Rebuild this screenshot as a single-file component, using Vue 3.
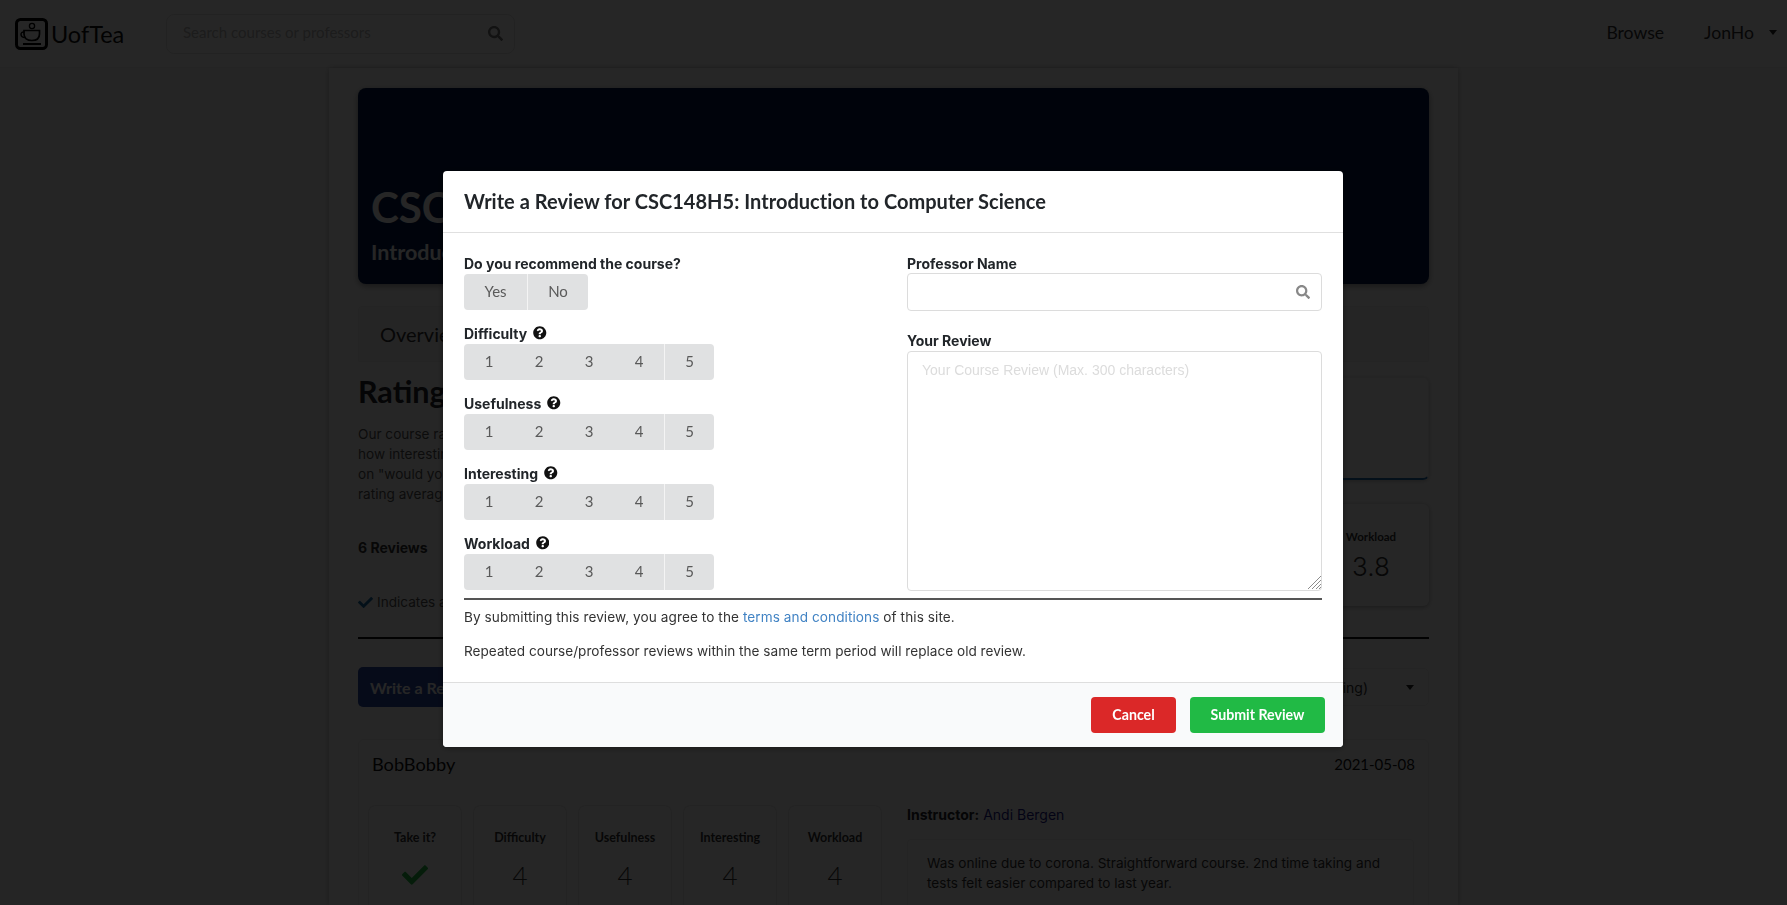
<script setup>
const ratingNames = ['Difficulty', 'Usefulness', 'Interesting', 'Workload']
const summary = [
  { name: 'Difficulty', value: '3.2' },
  { name: 'Usefulness', value: '4.0' },
  { name: 'Interesting', value: '3.7' },
  { name: 'Workload', value: '3.8' },
]
const scores = ['Difficulty', 'Usefulness', 'Interesting', 'Workload']
const searchPath = 'M505 442.7L405.3 343c-4.5-4.5-10.6-7-17-7H372c27.6-35.3 44-79.7 44-128C416 93.1 322.9 0 208 0S0 93.1 0 208s93.1 208 208 208c48.3 0 92.7-16.4 128-44v16.3c0 6.4 2.5 12.5 7 17l99.7 99.7c9.4 9.4 24.6 9.4 33.9 0l28.3-28.3c9.4-9.4 9.4-24.6.1-34zM208 336c-70.7 0-128-57.2-128-128 0-70.7 57.2-128 128-128 70.7 0 128 57.2 128 128 0 70.7-57.2 128-128 128z'
const helpPath = 'M504 256c0 136.997-111.043 248-248 248S8 392.997 8 256C8 119.083 119.043 8 256 8s248 111.083 248 248zM262.655 90c-54.497 0-89.255 22.957-116.549 63.758-3.536 5.286-2.353 12.415 2.715 16.258l34.699 26.31c5.205 3.947 12.621 3.008 16.665-2.122 17.864-22.658 30.113-35.797 57.303-35.797 20.429 0 45.698 13.148 45.698 32.958 0 14.976-12.363 22.667-32.534 33.976C247.128 238.528 216 254.941 216 296v4c0 6.627 5.373 12 12 12h56c6.627 0 12-5.373 12-12v-1.333c0-28.462 83.186-29.647 83.186-106.667 0-58.002-60.165-102-116.531-102zM256 338c-25.365 0-46 20.635-46 46 0 25.364 20.635 46 46 46s46-20.636 46-46c0-25.365-20.635-46-46-46z'
const checkPath = 'M173.898 439.404l-166.4-166.4c-9.997-9.997-9.997-26.206 0-36.204l36.203-36.204c9.997-9.998 26.207-9.998 36.204 0L192 312.69 432.095 72.596c9.997-9.997 26.207-9.997 36.204 0l36.203 36.204c9.997 9.997 9.997 26.206 0 36.204l-294.4 294.401c-9.998 9.997-26.207 9.997-36.204-.001z'
</script>

<template>
  <div class="page">
    <header class="nav">
      <svg class="logo" viewBox="0 0 33 32" fill="none" stroke="#000" stroke-width="2">
        <rect x="1.5" y="1.5" width="30" height="29" rx="4" stroke-width="3" />
        <circle cx="17" cy="8" r="2.6" stroke-width="1.3" />
        <path d="M9 12.5h15.5v3.5c0 4.2-3.2 6.5-7.7 6.5S9 20.2 9 16z" stroke-width="1.7" />
        <path d="M9.5 14c-4.8-1-4.8 5.8 1 5.5" stroke-width="1.5" />
        <path d="M8 26h18" stroke-width="2" />
      </svg>
      <span class="brand">UofTea</span>
      <div class="nav-search">
        <input class="nav-input" placeholder="Search courses or professors" />
        <svg class="nav-icon" viewBox="0 0 512 512"><path :d="searchPath" /></svg>
      </div>
      <nav class="nav-links">
        <span class="nav-browse">Browse</span>
        <span class="nav-user">JonHo</span>
        <i class="caret nav-caret"></i>
      </nav>
    </header>

    <main class="sheet">
      <section class="hero">
        <h1 class="hero-code">CSC148H5</h1>
        <h2 class="hero-name">Introduction to Computer Science</h2>
      </section>

      <div class="tabs"><span class="tab">Overview</span></div>

      <section class="ratings">
        <div class="ratings-text">
          <h2 class="ratings-title">Ratings</h2>
          <p class="ratings-copy">Our course ratings are based on difficulty, usefulness,<br />
            how interesting the course is, and workload. The percentage is<br />
            on "would you take it again" answers, with each<br />
            rating averaged from all reviews.</p>
          <p class="review-count">6 Reviews</p>
          <p class="indicates">
            <svg class="indicates-check" viewBox="0 0 512 512"><path :d="checkPath" /></svg>
            Indicates a user's recommendation
          </p>
        </div>
        <div class="ratings-cards">
          <div class="overall"></div>
          <div class="summary-row">
            <div v-for="s in summary" :key="s.name" class="summary-card">
              <span class="summary-label">{{ s.name }}</span>
              <span class="summary-value">{{ s.value }}</span>
            </div>
          </div>
        </div>
      </section>

      <hr class="rule" />

      <div class="toolbar">
        <span class="write-btn">Write a Review</span>
        <span class="sort">Date (Descending)<i class="caret sort-caret"></i></span>
      </div>

      <article class="review">
        <div class="review-head">
          <span class="review-user">BobBobby</span>
          <span class="review-date">2021-05-08</span>
        </div>
        <div class="review-main">
          <div class="score-row">
            <div class="score-card">
              <span class="score-label">Take it?</span>
              <svg class="score-check" viewBox="0 0 512 512"><path :d="checkPath" /></svg>
            </div>
            <div v-for="s in scores" :key="s" class="score-card">
              <span class="score-label">{{ s }}</span>
              <span class="score-value">4</span>
            </div>
          </div>
          <div class="review-body">
            <p class="instructor"><b>Instructor:</b> <span class="instructor-name">Andi Bergen</span></p>
            <div class="review-text">Was online due to corona. Straightforward course. 2nd time taking and tests felt easier compared to last year.</div>
          </div>
        </div>
      </article>
    </main>

    <div class="overlay">
      <div class="modal">
        <div class="modal-head"><span class="modal-title">Write a Review for CSC148H5: Introduction to Computer Science</span></div>
        <div class="modal-body">
          <div class="form-grid">
            <div class="form-left">
              <div class="field">
                <div class="label">Do you recommend the course?</div>
                <div class="group">
                  <span class="opt opt-yes">Yes</span>
                  <span class="opt opt-no">No</span>
                </div>
              </div>
              <div v-for="name in ratingNames" :key="name" class="field">
                <div class="label">
                  {{ name }}
                  <svg class="help" viewBox="0 0 512 512"><path :d="helpPath" /></svg>
                </div>
                <div class="group">
                  <span v-for="n in 5" :key="n" class="opt opt-num" :class="{ 'opt-last': n === 5 }">{{ n }}</span>
                </div>
              </div>
            </div>
            <div class="form-right">
              <div class="label label-tight">Professor Name</div>
              <div class="prof">
                <input class="prof-input" />
                <svg class="prof-icon" viewBox="0 0 512 512"><path :d="searchPath" /></svg>
              </div>
              <div class="label label-review">Your Review</div>
              <div class="review-wrap">
                <textarea class="review-input" placeholder="Your Course Review (Max. 300 characters)"></textarea>
                <svg class="grip" viewBox="0 0 13 13" fill="none" stroke="#8c8c8c" stroke-width="1">
                  <path d="M0 13L13 0M4 13L13 4M8 13L13 8M11 13L13 11" />
                </svg>
              </div>
            </div>
          </div>
          <div class="divider"></div>
          <p class="note note-first">By submitting this review, you agree to the <a class="link">terms and conditions</a> of this site.</p>
          <p class="note note-second">Repeated course/professor reviews within the same term period will replace old review.</p>
        </div>
        <div class="modal-foot">
          <span class="btn btn-cancel">Cancel</span>
          <span class="btn btn-submit">Submit Review</span>
        </div>
      </div>
    </div>
  </div>
</template>

<style>
html, body { height: 100%; overflow: hidden; background: #f9f9f9; }
</style>

<style scoped>
.page { height: 905px; overflow: hidden; font-family: Inter, "Liberation Sans", sans-serif; color: #212529; }
.nav { height: 67px; border-bottom: 1px solid #f0f0f0; background: #fff; display: flex; align-items: center; padding-left: 15px; box-sizing: content-box; }
.logo { width: 33px; height: 32px; flex: none; }
.brand { font: 400 23.5px Lato, sans-serif; margin-left: 3px; width: 115px; color: #111; }
.nav-search { width: 349px; height: 40px; box-sizing: border-box; border: 1px solid #e4e4e4; border-radius: 8px; display: flex; align-items: center; padding: 0 11px 0 16px; }
.nav-input { flex: 1; min-width: 0; border: 0; outline: 0; background: none; padding: 0 0 4px; font: 400 15px Lato, sans-serif; }
.nav-input::placeholder { color: #b8b8b8; }
.nav-icon { width: 15px; height: 15px; fill: #777; }
.nav-links { margin-left: auto; display: flex; align-items: center; font: 400 17.6px Lato, sans-serif; color: #333; padding: 0 10px 2px 0; }
.nav-browse { margin-right: 40px; }
.caret { display: block; width: 0; height: 0; border-left: 4.5px solid transparent; border-right: 4.5px solid transparent; border-top: 5px solid #222; }
.nav-caret { margin-left: 15px; margin-top: -1px; }

.sheet { width: 1129px; margin: 0 auto; height: 837px; background: #fff; box-shadow: 0 0 6px rgba(0,0,0,.25); padding: 20px 29px 0; box-sizing: border-box; }
.hero { height: 196px; background: #001a4a; border-radius: 8px; box-shadow: 0 2px 6px rgba(0,0,0,.4); color: #fff; padding: 92px 13px 0; box-sizing: border-box; }
.hero-code { margin: 0; font: 700 42px/54px Lato, sans-serif; }
.hero-name { margin: 5px 0 0; font: 700 21.5px/26px Lato, sans-serif; }

.tabs { margin-top: 22px; height: 56px; background: #f7f7f7; border: 1px solid #f0f0f0; border-radius: 4px 4px 0 0; box-sizing: border-box; display: flex; align-items: center; padding-left: 21px; }
.tab { font: 400 20px Lato, sans-serif; color: #333; }

.ratings { display: flex; justify-content: space-between; margin-top: 9px; height: 266px; }
.ratings-text { width: 430px; }
.ratings-title { margin: 0; height: 41px; font: 700 30.5px/41px Lato, sans-serif; }
.ratings-copy { margin: 12px 0 0; font-size: 13.6px; line-height: 20px; color: #555; white-space: nowrap; }
.review-count { margin: 34px 0 0; font-size: 14px; font-weight: 700; line-height: 20px; color: #333; }
.indicates { margin: 34px 0 0; font-size: 13.6px; line-height: 20px; color: #555; display: flex; align-items: center; gap: 4px; }
.indicates-check { width: 15px; height: 15px; fill: #1a6ea8; }
.ratings-cards { width: 628px; padding-top: 6px; box-sizing: content-box; }
.overall { height: 103px; border: 1px solid #eee; border-bottom: 2px solid #1f6fb0; border-radius: 6px; box-sizing: border-box; box-shadow: 0 1px 4px rgba(0,0,0,.25); }
.summary-row { display: flex; justify-content: flex-end; gap: 12px; margin-top: 24px; }
.summary-card { width: 116px; height: 102px; box-sizing: border-box; border-radius: 6px; background: #fff; box-shadow: 0 1px 5px rgba(0,0,0,.35); display: flex; flex-direction: column; align-items: center; padding-top: 25px; }
.summary-label { font: 700 11.5px/16px Lato, sans-serif; color: #333; }
.summary-value { font: 300 26px/32px Inter, sans-serif; color: #333; margin-top: 6px; }

.rule { margin: 0; height: 2px; border: 0; background: #111; }
.toolbar { display: flex; justify-content: space-between; align-items: center; margin-top: 29px; height: 38px; }
.write-btn { height: 40px; width: 140px; display: flex; align-items: center; padding-left: 12px; box-sizing: border-box; background: #2a4aa8; border-radius: 5px; color: #fff; font: 700 16px Lato, sans-serif; }
.sort { height: 38px; width: 290px; box-sizing: border-box; border: 1px solid #eee; border-radius: 5px; display: flex; align-items: center; justify-content: flex-end; font-size: 14px; color: #333; padding-right: 14px; }
.sort-caret { margin-left: 38px; }

.review { margin-top: 33px; height: 300px; border: 1px solid #eee; border-radius: 6px; padding: 12px 13px; box-sizing: border-box; }
.review-head { display: flex; justify-content: space-between; align-items: center; height: 24px; }
.review-user { font: 400 18.2px Lato, sans-serif; color: #111; }
.review-date { font: 400 15px Lato, sans-serif; color: #111; }
.review-main { display: flex; margin-top: 30px; }
.score-row { display: flex; gap: 13px; margin-left: -3px; width: 538px; }
.score-card { width: 92px; height: 130px; box-sizing: border-box; border-radius: 6px; background: #fff; box-shadow: 0 0 2px rgba(0,0,0,.3); display: flex; flex-direction: column; align-items: center; padding-top: 23px; }
.score-label { font: 700 12.5px/18px Lato, sans-serif; color: #333; }
.score-value { font: 300 26px/30px Lato, sans-serif; color: #333; margin-top: 13px; }
.score-check { width: 26px; height: 26px; margin-top: 15px; fill: #22bb45; }
.review-body { flex: 1; padding-right: 1px; }
.instructor { margin: -1px 0 0; font-size: 14px; line-height: 20px; }
.instructor-name { color: #1a1a8a; }
.review-text { margin-top: 14px; height: 100px; border: 1px solid #eee; border-radius: 4px; padding: 13px 19px; box-sizing: border-box; font-size: 13.6px; line-height: 20px; color: #333; }

.overlay { position: fixed; inset: 0; background: rgba(0,0,0,.85); display: flex; justify-content: center; align-items: flex-start; padding: 171px 1px 0 0; }
.modal { width: 900px; height: 576px; background: #fff; border-radius: 4px; box-sizing: border-box; display: flex; flex-direction: column; box-shadow: 0 1px 6px rgba(0,0,0,.4); }
.modal-head { height: 62px; box-sizing: border-box; border-bottom: 1px solid #e0e0e0; padding: 0 0 2px 21px; display: flex; align-items: center; font: 700 20px Lato, sans-serif; color: #212529; }
.modal-title { letter-spacing: .03px; }
.modal-body { flex: 1; padding: 21px 21px 0; }
.form-grid { display: flex; justify-content: space-between; height: 337px; }
.form-left { display: flex; flex-direction: column; gap: 14px; }
.field { height: 56px; }
.label { display: flex; align-items: center; gap: 6px; height: 20px; padding-bottom: 2px; box-sizing: border-box; font-size: 14px; font-weight: 700; color: #212529; }
.help { width: 13.5px; height: 13.5px; fill: #111; }
.group { display: flex; height: 36px; background: #e0e1e2; border-radius: 4px; width: max-content; }
.opt { display: flex; align-items: center; justify-content: center; height: 36px; padding-bottom: 2px; font: 400 15px Lato, sans-serif; color: #5a5a5a; box-sizing: border-box; }
.opt-yes { width: 64px; border-right: 1px solid #f4f4f4; }
.opt-no { width: 60px; }
.opt-num { width: 50px; }
.opt-last { border-left: 1px solid #f4f4f4; }
.form-right { width: 415px; }
.label-tight { height: 19px; padding-bottom: 0; }
.label-review { margin-top: 20px; }
.prof { height: 38px; box-sizing: border-box; border: 1px solid #dcdcdc; border-radius: 4px; display: flex; align-items: center; padding-right: 11px; }
.prof-input { flex: 1; min-width: 0; border: 0; outline: 0; background: none; height: 100%; padding: 0 12px; }
.prof-icon { width: 14px; height: 14px; fill: #888; }
.review-wrap { position: relative; height: 240px; }
.review-input { display: block; width: 100%; height: 240px; box-sizing: border-box; border: 1px solid #dcdcdc; border-radius: 4px; padding: 10px 14px; outline: 0; resize: none; font: 400 14px/1.2 "Liberation Sans", sans-serif; }
.review-input::placeholder { color: #dcdcdc; }
.grip { position: absolute; right: 1px; bottom: 2px; width: 13px; height: 13px; }
.divider { height: 2px; background: #555; margin-top: 7px; }
.note { margin: 7px 0 0; font-size: 13.6px; line-height: 20px; color: #333; }
.note-first { letter-spacing: .08px; }
.note-second { margin-top: 14px; letter-spacing: .01px; }
.link { color: #4183c4; }
.modal-foot { height: 65px; box-sizing: border-box; background: #f9fafb; border-top: 1px solid #dedede; border-radius: 0 0 4px 4px; display: flex; align-items: center; justify-content: flex-end; gap: 14px; padding-right: 18px; }
.btn { height: 36px; display: flex; align-items: center; justify-content: center; padding-bottom: 1px; box-sizing: border-box; border-radius: 4px; color: #fff; font: 700 14.2px Lato, sans-serif; }
.btn-cancel { width: 85px; background: #db2828; }
.btn-submit { width: 135px; background: #21ba45; }
</style>
